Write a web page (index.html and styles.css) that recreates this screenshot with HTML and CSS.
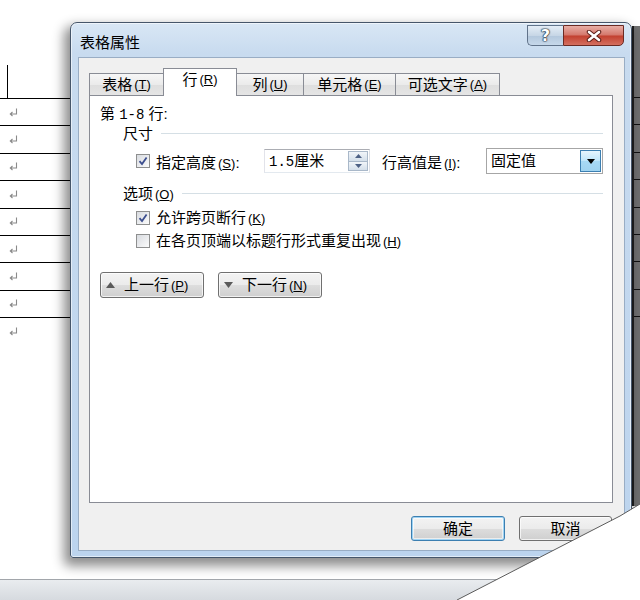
FILE: index.html
```html
<!DOCTYPE html>
<html lang="zh-CN">
<head>
    <meta charset="UTF-8">
    <meta name="viewport" content="width=device-width, initial-scale=1.0">
    <title>表格属性</title>
    <link rel="stylesheet" href="styles.css">
</head>
<body>
<div id="page">
    <div id="doc">
        <div class="doc-left">
            <div class="row row-top"><div class="cell-edge"></div></div>
            <div class="row"><svg class="mark" width="9" height="9" viewBox="0 0 9 9"><path d="M7.5 0.5 V6 H1.5 M3.5 4 L1.3 6 L3.5 8" fill="none" stroke="#8a8a8a" stroke-width="1.1"/></svg></div>
            <div class="row"><svg class="mark" width="9" height="9" viewBox="0 0 9 9"><path d="M7.5 0.5 V6 H1.5 M3.5 4 L1.3 6 L3.5 8" fill="none" stroke="#8a8a8a" stroke-width="1.1"/></svg></div>
            <div class="row"><svg class="mark" width="9" height="9" viewBox="0 0 9 9"><path d="M7.5 0.5 V6 H1.5 M3.5 4 L1.3 6 L3.5 8" fill="none" stroke="#8a8a8a" stroke-width="1.1"/></svg></div>
            <div class="row"><svg class="mark" width="9" height="9" viewBox="0 0 9 9"><path d="M7.5 0.5 V6 H1.5 M3.5 4 L1.3 6 L3.5 8" fill="none" stroke="#8a8a8a" stroke-width="1.1"/></svg></div>
            <div class="row"><svg class="mark" width="9" height="9" viewBox="0 0 9 9"><path d="M7.5 0.5 V6 H1.5 M3.5 4 L1.3 6 L3.5 8" fill="none" stroke="#8a8a8a" stroke-width="1.1"/></svg></div>
            <div class="row"><svg class="mark" width="9" height="9" viewBox="0 0 9 9"><path d="M7.5 0.5 V6 H1.5 M3.5 4 L1.3 6 L3.5 8" fill="none" stroke="#8a8a8a" stroke-width="1.1"/></svg></div>
            <div class="row"><svg class="mark" width="9" height="9" viewBox="0 0 9 9"><path d="M7.5 0.5 V6 H1.5 M3.5 4 L1.3 6 L3.5 8" fill="none" stroke="#8a8a8a" stroke-width="1.1"/></svg></div>
            <div class="row"><svg class="mark" width="9" height="9" viewBox="0 0 9 9"><path d="M7.5 0.5 V6 H1.5 M3.5 4 L1.3 6 L3.5 8" fill="none" stroke="#8a8a8a" stroke-width="1.1"/></svg></div>
            <div class="row row-last"><svg class="mark" width="9" height="9" viewBox="0 0 9 9"><path d="M7.5 0.5 V6 H1.5 M3.5 4 L1.3 6 L3.5 8" fill="none" stroke="#8a8a8a" stroke-width="1.1"/></svg></div>
        </div>
        <div class="doc-right">
            <div class="tick-gap"></div>
            <div class="tick"></div>
            <div class="tick"></div>
            <div class="tick"></div>
            <div class="tick"></div>
            <div class="tick"></div>
            <div class="tick"></div>
            <div class="tick"></div>
            <div class="tick"></div>
            <div class="tick"></div>
        </div>
    </div>
    <div id="statusbar"></div>

    <div id="dialog">
        <div class="titlebar">
            <span class="title">表格属性</span>
            <div class="caption-btns">
                <div class="cap cap-help">?</div>
                <div class="cap cap-close">
                    <svg width="16" height="12" viewBox="0 0 16 12">
                        <path d="M3 2 L13 10 M13 2 L3 10" stroke="#5a1c16" stroke-width="4.5" stroke-linecap="round"/>
                        <path d="M3 2 L13 10 M13 2 L3 10" stroke="#ffffff" stroke-width="2.6" stroke-linecap="round"/>
                    </svg>
                </div>
            </div>
        </div>

        <div class="client">
            <div class="tabs">
                <div class="tab tab-1">表格<span class="key">(<u>T</u>)</span></div>
                <div class="tab tab-2 sel">行<span class="key">(<u>R</u>)</span></div>
                <div class="tab tab-3">列<span class="key">(<u>U</u>)</span></div>
                <div class="tab tab-4">单元格<span class="key">(<u>E</u>)</span></div>
                <div class="tab tab-5">可选文字<span class="key">(<u>A</u>)</span></div>
            </div>

            <div class="panel">
                <div class="line rows-label">第 <span class="mono">1-8</span> 行:</div>

                <div class="group-head head-size">
                    <span>尺寸</span>
                    <span class="sep"></span>
                </div>

                <div class="size-row">
                    <span class="cb checked">
                        <svg width="10" height="10" viewBox="0 0 10 10"><path d="M1.5 5.2 L4 8 L8.6 1.4" fill="none" stroke="#3d4f8f" stroke-width="1.8"/></svg>
                    </span>
                    <span class="lbl-height">指定高度<span class="key">(<u>S</u>)</span>:</span>
                    <div class="spin-input">
                        <span class="value"><span class="mono">1.5</span>厘米</span>
                        <div class="spin">
                            <div class="spin-half"><svg width="7" height="4" viewBox="0 0 7 4"><path d="M0 4 L3.5 0 L7 4 Z" fill="#4d6185"/></svg></div>
                            <div class="spin-half"><svg width="7" height="4" viewBox="0 0 7 4"><path d="M0 0 L3.5 4 L7 0 Z" fill="#4d6185"/></svg></div>
                        </div>
                    </div>
                    <span class="lbl-rule">行高值是<span class="key">(<u>I</u>)</span>:</span>
                    <div class="select">
                        <span class="value">固定值</span>
                        <div class="drop">
                            <svg width="8" height="5" viewBox="0 0 8 5"><path d="M0 0 L8 0 L4 5 Z" fill="#000"/></svg>
                        </div>
                    </div>
                </div>

                <div class="group-head head-opts">
                    <span>选项<span class="key">(<u>O</u>)</span></span>
                    <span class="sep"></span>
                </div>

                <div class="check-row first">
                    <span class="cb checked">
                        <svg width="10" height="10" viewBox="0 0 10 10"><path d="M1.5 5.2 L4 8 L8.6 1.4" fill="none" stroke="#3d4f8f" stroke-width="1.8"/></svg>
                    </span>
                    <span>允许跨页断行<span class="key">(<u>K</u>)</span></span>
                </div>
                <div class="check-row">
                    <span class="cb"></span>
                    <span>在各页顶端以标题行形式重复出现<span class="key">(<u>H</u>)</span></span>
                </div>

                <div class="nav-row">
                    <div class="btn nav-btn">
                        <svg width="9" height="6" viewBox="0 0 9 6"><path d="M0 6 L4.5 0 L9 6 Z" fill="#5a5a5a"/></svg>
                        <span>上一行<span class="key">(<u>P</u>)</span></span>
                    </div>
                    <div class="btn nav-btn">
                        <svg width="9" height="6" viewBox="0 0 9 6"><path d="M0 0 L9 0 L4.5 6 Z" fill="#5a5a5a"/></svg>
                        <span>下一行<span class="key">(<u>N</u>)</span></span>
                    </div>
                </div>
            </div>

            <div class="footer">
                <div class="btn default">确定</div>
                <div class="btn">取消</div>
            </div>
        </div>
    </div>

    <svg class="curl" width="640" height="600" viewBox="0 0 640 600">
        <polygon points="457,600 620,516 640,504 640,600" fill="#ffffff"/>
        <polyline points="457,600 620,516 640,504" fill="none" stroke="#5b5b5b" stroke-width="1"/>
    </svg>
</div>
</body>
</html>
```

FILE: styles.css
```css
body {
    margin: 0;
    background-color: #ffffff;
    font-family: "Liberation Sans", "Noto Sans CJK SC", sans-serif;
    font-size: 15px;
    color: #000;
}

#page {
    position: relative;
    width: 640px;
    height: 600px;
    overflow: hidden;
    display: flex;
    flex-direction: column;
}

/* document behind the dialog */
#doc {
    flex: 1;
    display: flex;
}

.doc-left {
    width: 80px;
    padding-top: 65px;
}

.row {
    height: 26.4px;
    border-bottom: 1px solid #000;
    display: flex;
    align-items: center;
    padding-left: 9px;
}

.row-top {
    height: 33px;
    padding-left: 7px;
    align-items: stretch;
}

.cell-edge {
    border-left: 1px solid #000;
}

.row-last {
    border-bottom: none;
}

.mark {
    display: block;
}

.doc-right {
    width: 6px;
    margin-left: auto;
    margin-top: 26px;
    height: 480px;
    background-color: #6f6f6f;
    border-left: 2px solid #1e1e1e;
}

.tick-gap {
    height: 71px;
}

.tick {
    height: 26.4px;
    border-top: 1px solid #111;
}

#statusbar {
    height: 20px;
    border-top: 1px solid #a2a6ab;
    background: linear-gradient(#e9ecef, #d6dadf);
}

/* dialog window */
#dialog {
    position: absolute;
    left: 70px;
    top: 22px;
    width: 562px;
    height: 536px;
    box-sizing: border-box;
    border: 1px solid #46566a;
    border-radius: 7px 7px 3px 3px;
    background: linear-gradient(180deg, #d9e7f5 0, #c8dbef 30px, #bcd4ee 100%);
    box-shadow: inset 0 0 0 1px rgba(255, 255, 255, 0.55), -4px 6px 12px 2px rgba(0, 0, 0, 0.45);
    display: flex;
    flex-direction: column;
}

.titlebar {
    height: 35px;
    display: flex;
    justify-content: space-between;
    align-items: flex-start;
}

.title {
    margin: 10px 0 0 9px;
    line-height: 20px;
}

.caption-btns {
    display: flex;
    margin: 2px 7px 0 0;
}

.cap {
    height: 21px;
    box-sizing: border-box;
    display: flex;
    align-items: center;
    justify-content: center;
}

.cap-help {
    width: 36px;
    border: 1px solid #61738a;
    border-right: none;
    border-radius: 0 0 0 5px;
    background: linear-gradient(#e4edf6, #c7d6e6 50%, #b3c7dc 51%, #c6d8ea);
    font-family: "DejaVu Sans", sans-serif;
    font-weight: bold;
    font-size: 16px;
    line-height: 18px;
    color: #fff;
    text-shadow: 0 0 1px #22303f, 0 0 1px #22303f, 0 0 1px #22303f, 0 0 2px #22303f;
}

.cap-close {
    width: 61px;
    border: 1px solid #6b2a23;
    border-radius: 0 0 5px 0;
    background: linear-gradient(#e8aea6, #d4776b 48%, #c2402f 52%, #d46f5f);
}

.client {
    flex: 1;
    margin: 0 7px 7px 8px;
    background-color: #f0f0f0;
    box-shadow: 0 0 0 1px #99adc4;
    display: flex;
    flex-direction: column;
}

/* tabs */
.tabs {
    margin-top: 10px;
    height: 27px;
    padding-left: 10px;
    display: flex;
    align-items: flex-end;
}

.tab {
    height: 22px;
    box-sizing: border-box;
    border: 1px solid #898c95;
    border-bottom: none;
    margin-right: -1px;
    background: linear-gradient(#f6f6f6, #ebebeb 50%, #dedede 51%, #e5e5e5);
    display: flex;
    align-items: center;
    justify-content: center;
    line-height: 20px;
}

.tab.sel {
    height: 28px;
    margin-bottom: -1px;
    background: #ffffff;
    position: relative;
    z-index: 2;
    padding-bottom: 6px;
}

.tab-1 { width: 75px; }
.tab-2 { width: 74px; }
.tab-3 { width: 68px; }
.tab-4 { width: 93px; }
.tab-5 { width: 105px; }

.key {
    font-family: "Liberation Sans", sans-serif;
    font-size: 13px;
    margin-left: 2px;
}

.mono {
    font-family: "Liberation Mono", monospace;
    font-size: 14px;
}

.panel {
    height: 408px;
    box-sizing: border-box;
    margin: 0 11px 0 10px;
    border: 1px solid #898c95;
    background-color: #ffffff;
    padding: 8px 9px 0 10px;
    display: flex;
    flex-direction: column;
}

.line {
    line-height: 20px;
}

.group-head {
    display: flex;
    align-items: center;
    margin-left: 23px;
    line-height: 20px;
}

.head-size {
    height: 18px;
}

.head-opts {
    margin-top: 10px;
    height: 20px;
}

.sep {
    flex: 1;
    margin-left: 8px;
    border-top: 1px solid #d5dfe5;
    border-bottom: 1px solid #fff;
}

.size-row {
    margin: 5px 0 0 36px;
    height: 26px;
    display: flex;
    align-items: center;
}

.cb {
    width: 14px;
    height: 14px;
    box-sizing: border-box;
    border: 1px solid #8e8f8f;
    background: linear-gradient(135deg, #d8dbe0, #fbfbfb);
    display: inline-flex;
    align-items: center;
    justify-content: center;
    margin-right: 6px;
    flex-shrink: 0;
}

.lbl-height {
    width: 108px;
}

.spin-input {
    width: 106px;
    height: 24px;
    box-sizing: border-box;
    border: 1px solid #abadb3;
    border-color: #abadb3 #dbdfe6 #e3e9ef #e2e3ea;
    background: #fff;
    display: flex;
    align-items: center;
    justify-content: space-between;
    padding: 1px;
}

.value {
    padding-left: 3px;
    line-height: 20px;
}

.spin {
    width: 20px;
    height: 20px;
    display: flex;
    flex-direction: column;
}

.spin-half {
    flex: 1;
    border: 1px solid #a9b8c9;
    background: linear-gradient(#f1f5f9, #d4dfea);
    display: flex;
    align-items: center;
    justify-content: center;
}

.spin-half + .spin-half {
    border-top: none;
}

.lbl-rule {
    margin-left: 12px;
    width: 104px;
}

.select {
    width: 117px;
    height: 26px;
    box-sizing: border-box;
    border: 1px solid #a6a6a6;
    background: #fff;
    display: flex;
    align-items: center;
    justify-content: space-between;
    padding: 1px;
}

.drop {
    width: 21px;
    height: 22px;
    box-sizing: border-box;
    border: 1px solid #3c7fb1;
    background: linear-gradient(#e6f5fd, #bfe6fa 50%, #a7d9f5 51%, #9fd3f0);
    display: flex;
    align-items: center;
    justify-content: center;
}

.check-row {
    margin: 3px 0 0 36px;
    height: 20px;
    display: flex;
    align-items: center;
    line-height: 20px;
}

.check-row.first {
    margin-top: 4px;
}

.nav-row {
    margin-top: 21px;
    display: flex;
    gap: 14px;
}

.btn {
    height: 25px;
    box-sizing: border-box;
    border: 1px solid #707070;
    border-radius: 3px;
    background: linear-gradient(#f3f3f3, #ebebeb 50%, #dddddd 51%, #cfcfcf);
    box-shadow: inset 0 0 0 1px rgba(255, 255, 255, 0.7);
    display: flex;
    align-items: center;
    justify-content: center;
    line-height: 20px;
}

.nav-btn {
    width: 104px;
    height: 26px;
    justify-content: flex-start;
    padding-left: 5px;
    gap: 9px;
}

.footer {
    margin-top: 13px;
    padding-right: 12px;
    display: flex;
    justify-content: flex-end;
    gap: 14px;
}

.footer .btn {
    width: 93px;
}

.btn.default {
    width: 94px;
    border-color: #3c7fb1;
    box-shadow: inset 0 0 0 1px #9fd3f3, inset 0 0 0 2px rgba(255, 255, 255, 0.6);
}

.curl {
    position: absolute;
    left: 0;
    top: 0;
    z-index: 10;
}
```
